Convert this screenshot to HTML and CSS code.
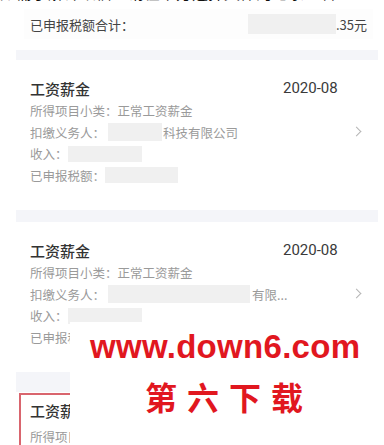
FILE: index.html
```html
<!DOCTYPE html>
<html lang="zh">
<head>
<meta charset="utf-8">
<link rel="stylesheet" href="styles.css">
</head>
<body>
<div class="page">
  <div class="top-note">如需了解详细信息请在下方选择具体的记录查看</div>
  <div class="summary">
    <span class="summary-label">已申报税额合计：</span>
    <span class="summary-value"><span class="blur blur-sum"></span>.35元</span>
  </div>
  <div class="band band-first"></div>
  <div class="card">
    <div class="card-head"><span class="title">工资薪金</span><span class="date">2020-08</span></div>
    <div class="line">所得项目小类：正常工资薪金</div>
    <div class="line line-arrow">扣缴义务人：<span class="blur blur-a"></span>科技有限公司<span class="chev"></span></div>
    <div class="line">收入：<span class="blur blur-b"></span></div>
    <div class="line">已申报税额：<span class="blur blur-c"></span></div>
  </div>
  <div class="band"></div>
  <div class="card">
    <div class="card-head"><span class="title">工资薪金</span><span class="date">2020-08</span></div>
    <div class="line">所得项目小类：正常工资薪金</div>
    <div class="line line-arrow">扣缴义务人：<span class="blur blur-d"></span>有限...<span class="chev"></span></div>
    <div class="line">收入：<span class="blur blur-b"></span></div>
    <div class="line">已申报税额：<span class="blur blur-c"></span></div>
  </div>
  <div class="band band-last"></div>
  <div class="card card-selected">
    <div class="card-head"><span class="title">工资薪金</span><span class="date">2020-08</span></div>
    <div class="line">所得项目小类：正常工资薪金</div>
  </div>
  <div class="watermark">
    <div class="wm-url">www.down6.com</div>
    <div class="wm-name">第六下载</div>
  </div>
</div>
</body>
</html>
```
FILE: styles.css
```css
html, body {
  margin: 0;
  padding: 0;
  background: #ffffff;
}
body {
  width: 384px;
  height: 445px;
  overflow: hidden;
  font-family: "Noto Sans CJK SC", "Noto Sans", sans-serif;
}
.page {
  position: relative;
  width: 384px;
  height: 445px;
  overflow: hidden;
}
.top-note {
  margin-top: -17px;
  height: 18px;
  line-height: 18px;
  font-size: 16px;
  color: #111;
  white-space: nowrap;
}
.summary {
  margin: 8px 11px 0 24px;
  padding: 0 6px;
  height: 30px;
  display: flex;
  align-items: center;
  justify-content: space-between;
  background: #fdfdfd;
  font-size: 13px;
  color: #444;
}
.summary-value {
  display: flex;
  align-items: center;
}
.blur {
  display: inline-block;
  background: #f0f0f0;
  vertical-align: middle;
}
.blur-sum { width: 88px; height: 20px; }
.band {
  margin: 0 6px 0 16px;
  height: 12px;
  background: #f4f5f9;
}
.band-first { margin-top: 11px; height: 10px; }
.band-last { height: 20px; }
.card {
  margin: 0 6px 0 16px;
  padding: 16px 0 24px 14px;
}
.card-head {
  display: flex;
  height: 24px;
  align-items: center;
  font-size: 15px;
  color: #333;
  font-weight: 500;
}
.title { width: 253px; }
.date {
  font-family: "Roboto", "Liberation Sans", sans-serif;
  font-size: 15px;
  font-weight: 400;
  color: #3a3a3a;
}
.line {
  position: relative;
  height: 21.5px;
  line-height: 21.5px;
  font-size: 12.5px;
  color: #9a9a9a;
  display: flex;
  align-items: center;
  white-space: nowrap;
}
.blur-a { width: 54px; height: 18px; margin: 0 1px 0 3px; }
.blur-b { width: 74px; height: 16px; }
.blur-c { width: 73px; height: 16px; }
.blur-d { width: 142px; height: 18px; margin: 0 2px 0 3px; }
.chev {
  position: absolute;
  right: 18px;
  top: 6px;
  width: 6px;
  height: 6px;
  border-top: 1px solid #b5b5b5;
  border-right: 1px solid #b5b5b5;
  transform: rotate(45deg);
}
.card-selected {
  margin: 1px 6px 0 19px;
  padding: 2px 0 0 9px;
  border: 2px solid #d9656e;
  border-right: none;
}
.card-selected .card-head { height: 26px; }
.card-selected .line { height: 28px; line-height: 28px; }
.watermark {
  position: absolute;
  left: 70px;
  top: 322px;
  right: 0;
  bottom: 0;
  background: #ffffff;
  color: #e1171f;
  font-weight: 700;
}
.wm-url {
  margin: 6px 0 0 20px;
  font-family: "Liberation Sans", Arial, sans-serif;
  font-size: 33px;
  line-height: 38px;
  letter-spacing: 0.3px;
}
.wm-name {
  margin: 10px 0 0 75px;
  font-family: "Noto Sans CJK SC", sans-serif;
  font-size: 32px;
  line-height: 40px;
  letter-spacing: 10px;
}
```
